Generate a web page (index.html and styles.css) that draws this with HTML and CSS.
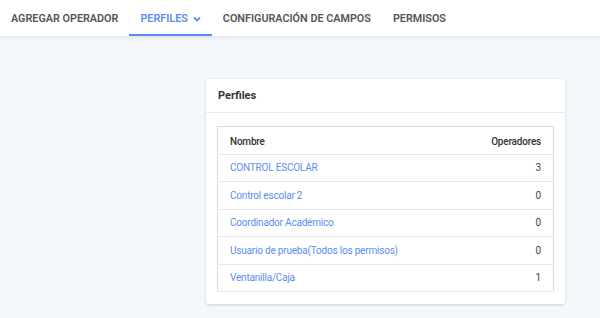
FILE: index.html
```html
<!DOCTYPE html>
<html lang="es">
<head>
  <meta charset="UTF-8">
  <title>Perfiles</title>
  <link rel="stylesheet" href="styles.css">
</head>
<body>
  <nav class="tabs">
    <a class="tab">AGREGAR OPERADOR</a>
    <a class="tab active">PERFILES
      <svg class="chev" width="8" height="6" viewBox="0 0 8 6"><path d="M1 1.5 L4 4.5 L7 1.5" fill="none" stroke="currentColor" stroke-width="1.8"/></svg>
    </a>
    <a class="tab">CONFIGURACIÓN DE CAMPOS</a>
    <a class="tab">PERMISOS</a>
  </nav>

  <main class="content">
    <section class="card">
      <header class="card-head">Perfiles</header>
      <div class="card-body">
        <table class="grid">
          <thead>
            <tr><th>Nombre</th><th class="num">Operadores</th></tr>
          </thead>
          <tbody>
            <tr><td><a>CONTROL ESCOLAR</a></td><td class="num">3</td></tr>
            <tr><td><a>Control escolar 2</a></td><td class="num">0</td></tr>
            <tr><td><a>Coordinador Académico</a></td><td class="num">0</td></tr>
            <tr><td><a>Usuario de prueba(Todos los permisos)</a></td><td class="num">0</td></tr>
            <tr><td><a>Ventanilla/Caja</a></td><td class="num">1</td></tr>
          </tbody>
        </table>
      </div>
    </section>
  </main>
</body>
</html>
```

FILE: styles.css
```css
* { margin: 0; padding: 0; box-sizing: border-box; }
body {
  font-family: Roboto, "Noto Sans", sans-serif;
  background: #f4f8fd;
  color: #333;
  min-height: 100vh;
}
.tabs {
  display: flex;
  height: 36px;
  background: #fff;
  box-shadow: 0 1px 4px rgba(0,0,0,0.12);
}
.tab {
  display: flex;
  align-items: center;
  gap: 5px;
  padding: 2px 11px 0 11px;
  font-size: 10.8px;
  font-weight: 600;
  color: #555;
  border-bottom: 2px solid transparent;
}
.tab.active {
  color: #5b8def;
  border-bottom-color: #5b8def;
}
.chev { margin-top: 1px; }
.content {
  display: flex;
  padding: 43px 0 0 206px;
}
.card {
  width: 359px;
  background: #fff;
  border-radius: 3px;
  box-shadow: 0 1px 3px rgba(0,0,0,0.18);
}
.card-head {
  height: 34px;
  display: flex;
  align-items: center;
  padding: 0 12px;
  font-size: 11px;
  font-weight: 700;
  color: #333;
  border-bottom: 1px solid #e9ecef;
}
.card-body { padding: 13px 11px 12px 11px; }
.grid {
  width: 100%;
  border-collapse: collapse;
  border: 1px solid #d5d9e2;
  font-size: 10px;
  letter-spacing: -0.2px;
}
.grid th, .grid td {
  height: 27.5px;
  padding: 0 12px;
  text-align: left;
  border-bottom: 1px solid #e6e8ec;
}
.grid th { font-weight: 500; color: #333; padding-top: 3px; }
.grid td { color: #444; }
.grid a { color: #5b8def; }
.grid .num { text-align: right; }
```
